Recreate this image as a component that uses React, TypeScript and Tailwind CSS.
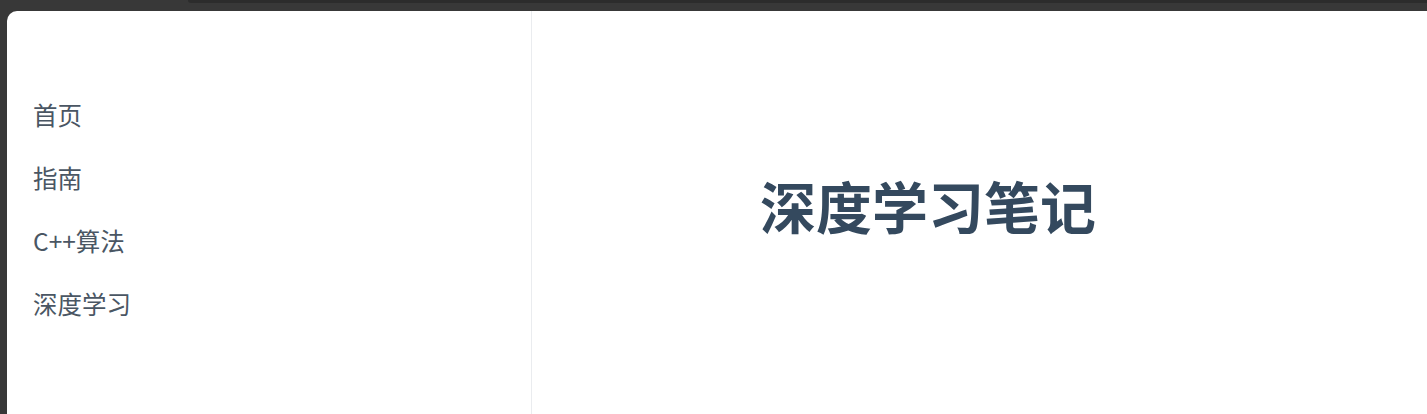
export default function App() {
  const items = ["首页", "指南", "C++算法", "深度学习"];
  return (
    <div className="flex h-screen w-full flex-col overflow-hidden bg-[#383838] font-['Noto_Sans_CJK_SC','Noto_Sans',sans-serif]">
      <div className="flex h-[11px] shrink-0">
        <div className="ml-[188px] h-[3px] flex-1 rounded-bl-[6px] bg-[#2c2c2c]" />
      </div>
      <div className="ml-[7px] flex flex-1 rounded-tl-[10px] bg-white">
        <aside className="w-[525px] shrink-0 border-r border-[#eaecef] pt-[73px] pl-[26px]">
          {items.map((t) => (
            <div key={t} className="flex h-[63px] items-center text-[24.5px] text-[#4a5663]">
              {t}
            </div>
          ))}
        </aside>
        <main className="flex-1 pt-[160px] pr-[103px] text-center">
          <h1 className="text-[56px] leading-[1.2] font-bold text-[#34495e]">深度学习笔记</h1>
        </main>
      </div>
    </div>
  );
}
